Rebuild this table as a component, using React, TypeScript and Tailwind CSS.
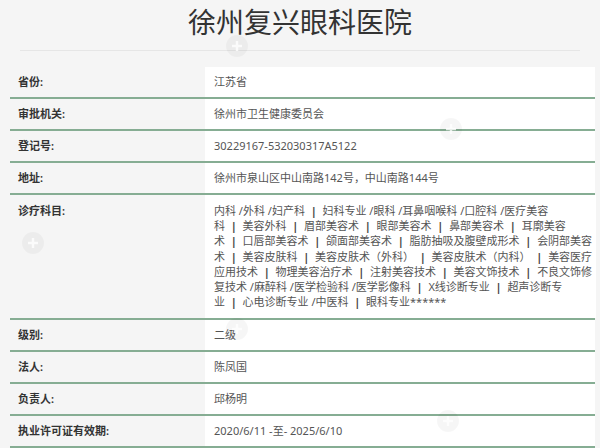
import React from "react";

const rows: { label: string; value: string }[] = [
  { label: "省份:", value: "江苏省" },
  { label: "审批机关:", value: "徐州市卫生健康委员会" },
  { label: "登记号:", value: "30229167-532030317A5122" },
  { label: "地址:", value: "徐州市泉山区中山南路142号，中山南路144号" },
];

const tail: { label: string; value: string }[] = [
  { label: "级别:", value: "二级" },
  { label: "法人:", value: "陈凤国" },
  { label: "负责人:", value: "邱杨明" },
  { label: "执业许可证有效期:", value: "2020/6/11 -至- 2025/6/10" },
];

// line breaks as the source page wraps them
const deptLines = [
  "内科 /外科 /妇产科 | 妇科专业 /眼科 /耳鼻咽喉科 /口腔科 /医疗美容",
  "科 | 美容外科 | 眉部美容术 | 眼部美容术 | 鼻部美容术 | 耳廓美容",
  "术 | 口唇部美容术 | 颌面部美容术 | 脂肪抽吸及腹壁成形术 | 会阴部美容",
  "术 | 美容皮肤科 | 美容皮肤术（外科） | 美容皮肤术（内科） | 美容医疗",
  "应用技术 | 物理美容治疗术 | 注射美容技术 | 美容文饰技术 | 不良文饰修",
  "复技术 /麻醉科 /医学检验科 /医学影像科 | X线诊断专业 | 超声诊断专",
  "业 | 心电诊断专业 /中医科 | 眼科专业******",
];

const nb = "\u00a0\u00a0";

const DeptLine = ({ text }: { text: string }) => (
  <div className="whitespace-nowrap">
    {text.split(" | ").map((part, i) => (
      <React.Fragment key={i}>
        {i > 0 && (
          <>
            {nb}
            <span className="font-bold text-[#444]">|</span>
            {nb}
          </>
        )}
        {part}
      </React.Fragment>
    ))}
  </div>
);

const Row = ({ label, value }: { label: string; value: string }) => (
  <div className="grid grid-cols-[195px_1fr] border-b-2 border-[#86ad93]">
    <div className="h-[30px] pl-[8px] flex items-center font-semibold text-[#333]">{label}</div>
    <div className="h-[30px] pl-[9px] flex items-center bg-white text-[#555]">{value}</div>
  </div>
);

// faint watermark badges lying over the page
const Mark = ({ x, y }: { x: number; y: number }) => (
  <svg className="absolute" style={{ left: x, top: y }} width="22" height="22" viewBox="0 0 22 22">
    <circle cx="11" cy="11" r="11" fill="#000" fillOpacity="0.035" />
    <path d="M11 6v10M6 11h10" stroke="#fff" strokeOpacity="0.8" strokeWidth="2.4" />
  </svg>
);

export default function App() {
  return (
    <div
      className="relative w-[600px] h-[448px] overflow-hidden bg-[#f5f5f5]"
      style={{ fontFamily: '"Noto Sans", "Noto Sans CJK SC", sans-serif' }}
    >
      <h1 className="pt-[2px] text-center text-[28px] leading-[40px] text-[#333] font-normal">
        徐州复兴眼科医院
      </h1>
      <div className="mx-5 mt-[8px] h-px bg-[#e6e6e6]" />

      <div className="mt-[16px] ml-[10px] w-[585px] text-[11px]">
        {rows.map((r) => (
          <Row key={r.label} {...r} />
        ))}
        <div className="grid grid-cols-[195px_1fr] border-b-2 border-[#86ad93]">
          <div className="pl-[8px] pt-[8px] leading-[15px] font-semibold text-[#333]">诊疗科目:</div>
          <div className="bg-white pl-[9px] pr-[4px] pt-[8px] pb-[9px] leading-[15.2px] text-[#555]">
            {deptLines.map((l, i) => (
              <DeptLine key={i} text={l} />
            ))}
          </div>
        </div>
        {tail.map((r) => (
          <Row key={r.label} {...r} />
        ))}
      </div>

      <Mark x={226} y={35} />
      <Mark x={440} y={118} />
      <Mark x={22} y={232} />
      <Mark x={226} y={318} />
      <Mark x={437} y={410} />
    </div>
  );
}
